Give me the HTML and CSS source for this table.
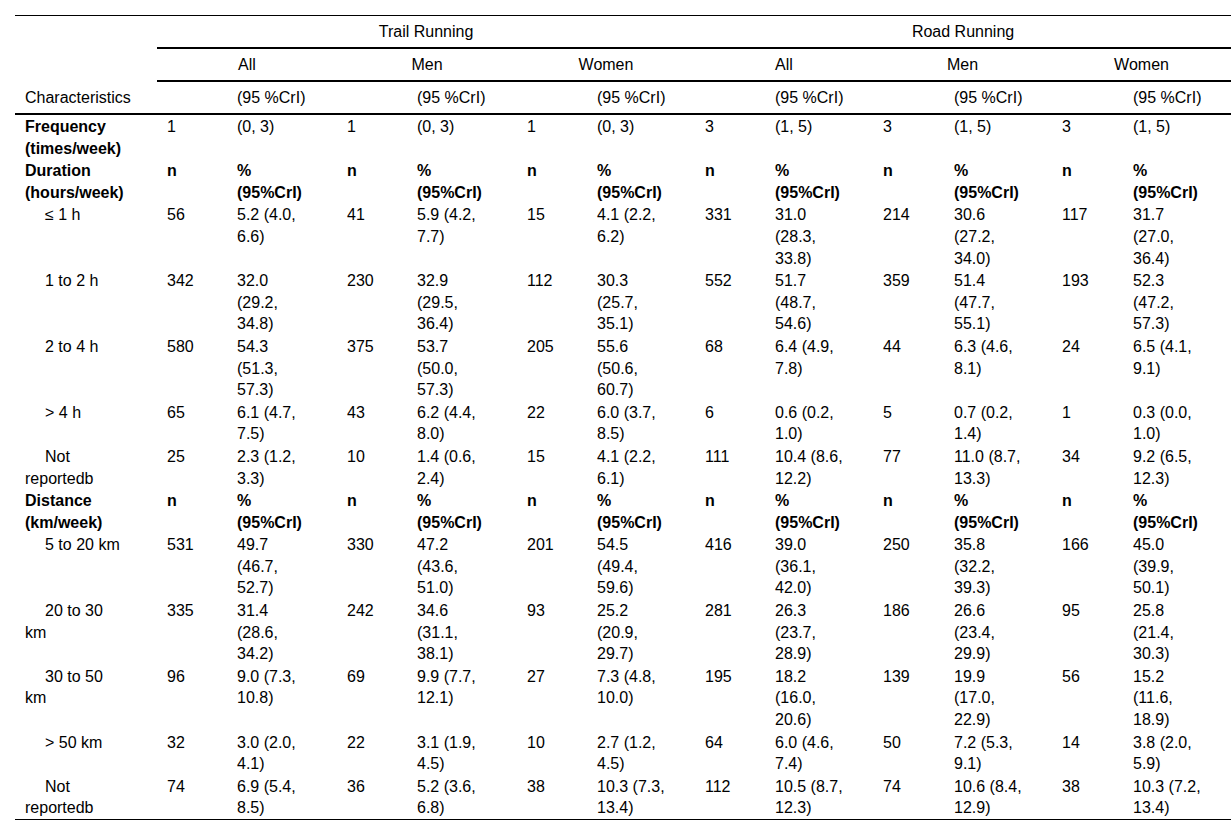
FILE: index.html
```html
<!DOCTYPE html>
<html lang="en">
<head>
<meta charset="utf-8">
<title>Running characteristics</title>
<link rel="stylesheet" href="styles.css">
</head>
<body>
<table class="data">
  <colgroup>
    <col class="c-label">
    <col class="c-n"><col class="c-pct-a">
    <col class="c-n"><col class="c-pct-a">
    <col class="c-n"><col class="c-pct-b">
    <col class="c-n"><col class="c-pct-b">
    <col class="c-n2"><col class="c-pct-b">
    <col class="c-n2"><col class="c-pct-b">
  </colgroup>
  <thead>
    <tr class="h1">
      <th class="blank"></th>
      <th colspan="6" class="group">Trail Running</th>
      <th colspan="6" class="group">Road Running</th>
    </tr>
    <tr class="h2">
      <th class="blank"></th>
      <th colspan="2" class="group">All</th>
      <th colspan="2" class="group">Men</th>
      <th colspan="2" class="group">Women</th>
      <th colspan="2" class="group">All</th>
      <th colspan="2" class="group">Men</th>
      <th colspan="2" class="group">Women</th>
    </tr>
    <tr class="h3">
      <th class="label">Characteristics</th>
      <th></th><th class="pct">(95 %CrI)</th>
      <th></th><th class="pct">(95 %CrI)</th>
      <th></th><th class="pct">(95 %CrI)</th>
      <th></th><th class="pct">(95 %CrI)</th>
      <th></th><th class="pct">(95 %CrI)</th>
      <th></th><th class="pct">(95 %CrI)</th>
    </tr>
  </thead>
  <tbody>
    <tr>
      <td class="label"><b>Frequency (times/week)</b></td>
      <td>1</td><td class="pct">(0, 3)</td>
      <td>1</td><td class="pct">(0, 3)</td>
      <td>1</td><td class="pct">(0, 3)</td>
      <td>3</td><td class="pct">(1, 5)</td>
      <td>3</td><td class="pct">(1, 5)</td>
      <td>3</td><td class="pct">(1, 5)</td>
    </tr>
    <tr class="section">
      <td class="label">Duration (hours/week)</td>
      <td>n</td><td class="pct">% (95%CrI)</td>
      <td>n</td><td class="pct">% (95%CrI)</td>
      <td>n</td><td class="pct">% (95%CrI)</td>
      <td>n</td><td class="pct">% (95%CrI)</td>
      <td>n</td><td class="pct">% (95%CrI)</td>
      <td>n</td><td class="pct">% (95%CrI)</td>
    </tr>
    <tr>
      <td class="label sub">≤ 1 h</td>
      <td>56</td><td class="pct">5.2 (4.0, 6.6)</td>
      <td>41</td><td class="pct">5.9 (4.2, 7.7)</td>
      <td>15</td><td class="pct">4.1 (2.2, 6.2)</td>
      <td>331</td><td class="pct">31.0 (28.3, 33.8)</td>
      <td>214</td><td class="pct">30.6 (27.2, 34.0)</td>
      <td>117</td><td class="pct">31.7 (27.0, 36.4)</td>
    </tr>
    <tr>
      <td class="label sub">1 to 2 h</td>
      <td>342</td><td class="pct">32.0 (29.2, 34.8)</td>
      <td>230</td><td class="pct">32.9 (29.5, 36.4)</td>
      <td>112</td><td class="pct">30.3 (25.7, 35.1)</td>
      <td>552</td><td class="pct">51.7 (48.7, 54.6)</td>
      <td>359</td><td class="pct">51.4 (47.7, 55.1)</td>
      <td>193</td><td class="pct">52.3 (47.2, 57.3)</td>
    </tr>
    <tr>
      <td class="label sub">2 to 4 h</td>
      <td>580</td><td class="pct">54.3 (51.3, 57.3)</td>
      <td>375</td><td class="pct">53.7 (50.0, 57.3)</td>
      <td>205</td><td class="pct">55.6 (50.6, 60.7)</td>
      <td>68</td><td class="pct">6.4 (4.9, 7.8)</td>
      <td>44</td><td class="pct">6.3 (4.6, 8.1)</td>
      <td>24</td><td class="pct">6.5 (4.1, 9.1)</td>
    </tr>
    <tr>
      <td class="label sub">&gt; 4 h</td>
      <td>65</td><td class="pct">6.1 (4.7, 7.5)</td>
      <td>43</td><td class="pct">6.2 (4.4, 8.0)</td>
      <td>22</td><td class="pct">6.0 (3.7, 8.5)</td>
      <td>6</td><td class="pct">0.6 (0.2, 1.0)</td>
      <td>5</td><td class="pct">0.7 (0.2, 1.4)</td>
      <td>1</td><td class="pct">0.3 (0.0, 1.0)</td>
    </tr>
    <tr>
      <td class="label sub">Not reportedb</td>
      <td>25</td><td class="pct">2.3 (1.2, 3.3)</td>
      <td>10</td><td class="pct">1.4 (0.6, 2.4)</td>
      <td>15</td><td class="pct">4.1 (2.2, 6.1)</td>
      <td>111</td><td class="pct">10.4 (8.6, 12.2)</td>
      <td>77</td><td class="pct">11.0 (8.7, 13.3)</td>
      <td>34</td><td class="pct">9.2 (6.5, 12.3)</td>
    </tr>
    <tr class="section">
      <td class="label">Distance (km/week)</td>
      <td>n</td><td class="pct">% (95%CrI)</td>
      <td>n</td><td class="pct">% (95%CrI)</td>
      <td>n</td><td class="pct">% (95%CrI)</td>
      <td>n</td><td class="pct">% (95%CrI)</td>
      <td>n</td><td class="pct">% (95%CrI)</td>
      <td>n</td><td class="pct">% (95%CrI)</td>
    </tr>
    <tr>
      <td class="label sub">5 to 20 km</td>
      <td>531</td><td class="pct">49.7 (46.7, 52.7)</td>
      <td>330</td><td class="pct">47.2 (43.6, 51.0)</td>
      <td>201</td><td class="pct">54.5 (49.4, 59.6)</td>
      <td>416</td><td class="pct">39.0 (36.1, 42.0)</td>
      <td>250</td><td class="pct">35.8 (32.2, 39.3)</td>
      <td>166</td><td class="pct">45.0 (39.9, 50.1)</td>
    </tr>
    <tr>
      <td class="label sub">20 to 30 km</td>
      <td>335</td><td class="pct">31.4 (28.6, 34.2)</td>
      <td>242</td><td class="pct">34.6 (31.1, 38.1)</td>
      <td>93</td><td class="pct">25.2 (20.9, 29.7)</td>
      <td>281</td><td class="pct">26.3 (23.7, 28.9)</td>
      <td>186</td><td class="pct">26.6 (23.4, 29.9)</td>
      <td>95</td><td class="pct">25.8 (21.4, 30.3)</td>
    </tr>
    <tr>
      <td class="label sub">30 to 50 km</td>
      <td>96</td><td class="pct">9.0 (7.3, 10.8)</td>
      <td>69</td><td class="pct">9.9 (7.7, 12.1)</td>
      <td>27</td><td class="pct">7.3 (4.8, 10.0)</td>
      <td>195</td><td class="pct">18.2 (16.0, 20.6)</td>
      <td>139</td><td class="pct">19.9 (17.0, 22.9)</td>
      <td>56</td><td class="pct">15.2 (11.6, 18.9)</td>
    </tr>
    <tr>
      <td class="label sub">&gt; 50 km</td>
      <td>32</td><td class="pct">3.0 (2.0, 4.1)</td>
      <td>22</td><td class="pct">3.1 (1.9, 4.5)</td>
      <td>10</td><td class="pct">2.7 (1.2, 4.5)</td>
      <td>64</td><td class="pct">6.0 (4.6, 7.4)</td>
      <td>50</td><td class="pct">7.2 (5.3, 9.1)</td>
      <td>14</td><td class="pct">3.8 (2.0, 5.9)</td>
    </tr>
    <tr class="last">
      <td class="label sub">Not reportedb</td>
      <td>74</td><td class="pct">6.9 (5.4, 8.5)</td>
      <td>36</td><td class="pct">5.2 (3.6, 6.8)</td>
      <td>38</td><td class="pct">10.3 (7.3, 13.4)</td>
      <td>112</td><td class="pct">10.5 (8.7, 12.3)</td>
      <td>74</td><td class="pct">10.6 (8.4, 12.9)</td>
      <td>38</td><td class="pct">10.3 (7.2, 13.4)</td>
    </tr>
  </tbody>
</table>
</body>
</html>
```
FILE: styles.css
```css
html, body {
  margin: 0;
  padding: 0;
  background: #ffffff;
}

body {
  font-family: "Liberation Sans", Arial, sans-serif;
  font-size: 16px;
  line-height: 22px;
  color: #000000;
}

.data {
  margin: 15px 0 0 15px;
  width: 1216px;
  table-layout: fixed;
  border-collapse: separate;
  border-spacing: 0;
}

.c-label { width: 142px; }
.c-n { width: 70px; }
.c-n2 { width: 71px; }
.c-pct-a { width: 110px; }
.c-pct-b { width: 108px; }

.data th,
.data td {
  padding: 0 10px;
  text-align: left;
  vertical-align: top;
  font-weight: normal;
}

/* header */
.data thead th {
  padding-top: 5px;
  padding-bottom: 4px;
  vertical-align: middle;
  white-space: nowrap;
}

.data .h1 th {
  border-top: 1px solid #000;
}

.data .h1 .group,
.data .h2 .group,
.data .h3 th {
  border-bottom: 2px solid #000;
}

.data .group {
  text-align: center;
}

/* body */
.data tbody td {
  padding-top: 1px;
  line-height: 21.6px;
}

.data td.label {
  padding-right: 30px;
}

.data td.pct {
  padding-right: 26px;
}

.data td.sub {
  text-indent: 20px;
}

.data .section td {
  font-weight: bold;
}

.data .last td {
  border-bottom: 1px solid #000;
}
```
